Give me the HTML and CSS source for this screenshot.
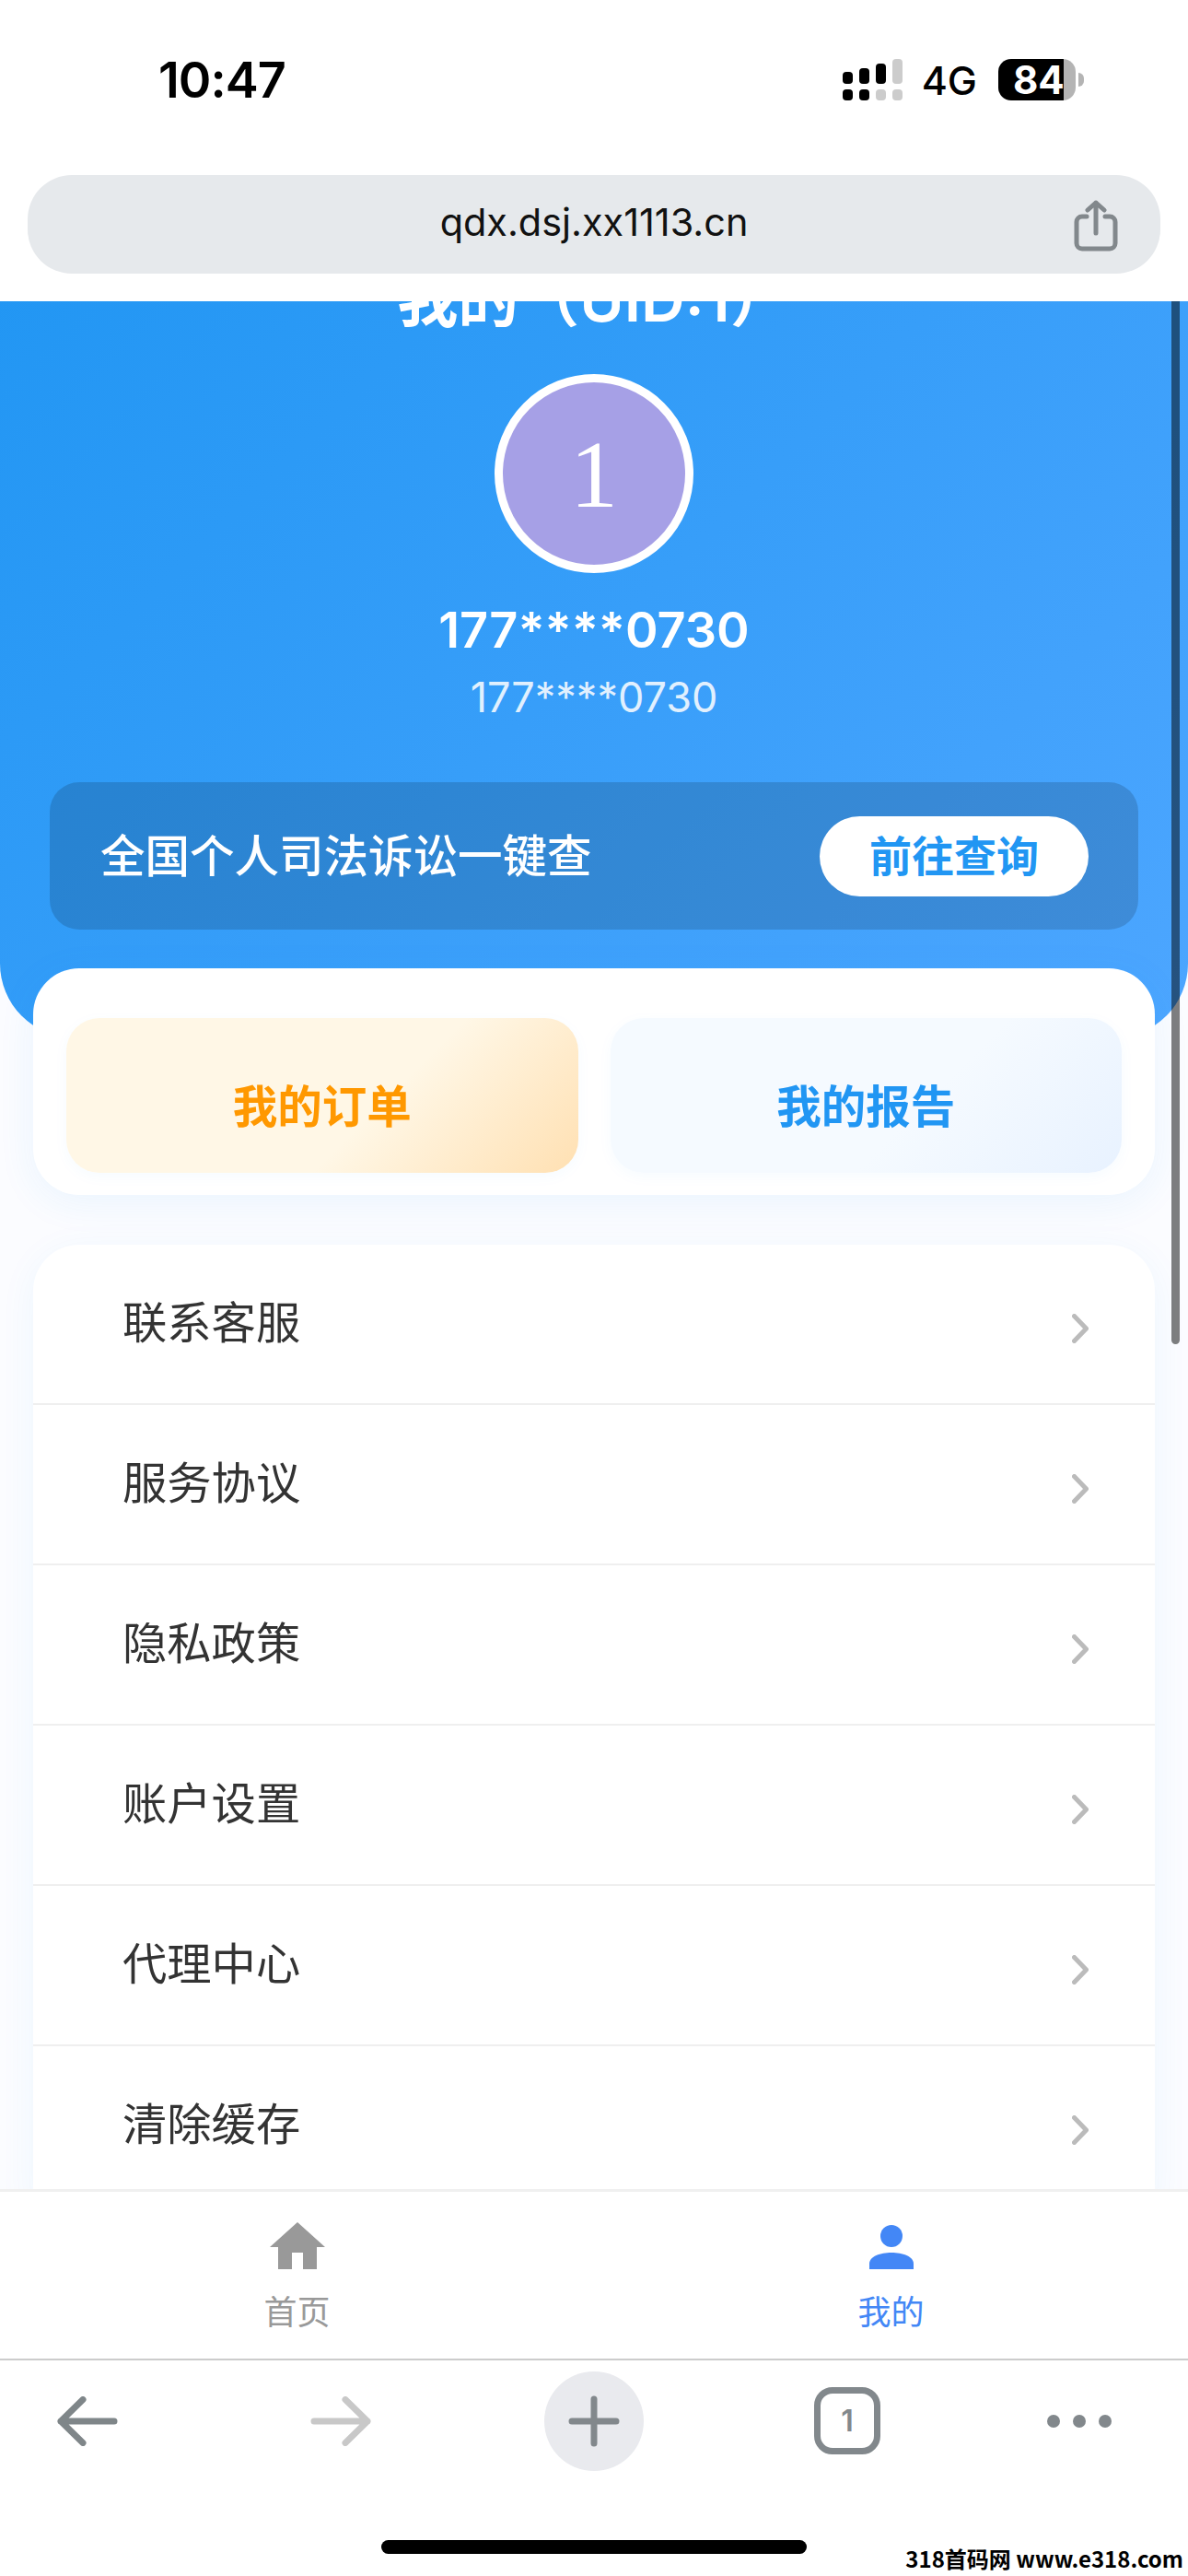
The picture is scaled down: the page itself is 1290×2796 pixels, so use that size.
FILE: index.html
```html
<!DOCTYPE html>
<html lang="zh-CN">
<head>
    <meta charset="UTF-8">
    <meta name="viewport" content="width=device-width, initial-scale=1.0">
    <title>我的</title>
    <link rel="stylesheet" href="styles.css">
</head>
<body>
    <div class="status-bar">
        <span class="time">10:47</span>
        <div class="status-right">
            <svg class="signal" viewBox="0 0 65 45">
                <rect x="0" y="14" width="11" height="13" rx="4" fill="#000"/>
                <rect x="18" y="10" width="11" height="17" rx="4" fill="#000"/>
                <rect x="36" y="5" width="11" height="22" rx="4" fill="#000"/>
                <rect x="54" y="0" width="11" height="27" rx="4" fill="#ccc"/>
                <rect x="0" y="33" width="11" height="12" rx="4" fill="#000"/>
                <rect x="18" y="33" width="11" height="12" rx="4" fill="#000"/>
                <rect x="36" y="33" width="11" height="12" rx="4" fill="#ccc"/>
                <rect x="54" y="33" width="11" height="12" rx="4" fill="#ccc"/>
            </svg>
            <span class="network">4G</span>
            <div class="battery"><span class="battery-level">84</span></div>
            <div class="battery-nub"></div>
        </div>
    </div>

    <div class="url-wrap">
        <div class="url-bar">
            <span class="url-text">qdx.dsj.xx1113.cn</span>
            <svg class="share-icon" viewBox="0 0 48 56" fill="none" stroke="#82888c" stroke-width="5" stroke-linecap="round" stroke-linejoin="round">
                <path d="M14 18H9a6 6 0 0 0-6 6v23a6 6 0 0 0 6 6h30a6 6 0 0 0 6-6V24a6 6 0 0 0-6-6h-5"/>
                <path d="M24 36V3M15 11l9-8 9 8"/>
            </svg>
        </div>
    </div>

    <div class="main">
        <div class="page">
            <div class="hero">
                <div class="hero-title">我的（UID:1）</div>
                <div class="avatar">1</div>
                <div class="user-name">177****0730</div>
                <div class="user-phone">177****0730</div>
                <div class="banner">
                    <span class="banner-text">全国个人司法诉讼一键查</span>
                    <span class="banner-btn">前往查询</span>
                </div>
            </div>

            <div class="quick-card">
                <div class="quick-btn quick-orders">我的订单</div>
                <div class="quick-btn quick-reports">我的报告</div>
            </div>

            <div class="menu">
                <div class="menu-row"><span>联系客服</span><svg class="chevron" viewBox="0 0 18 32"><path d="M2.5 2.5L15.5 16L2.5 29.5"/></svg></div>
                <div class="menu-row"><span>服务协议</span><svg class="chevron" viewBox="0 0 18 32"><path d="M2.5 2.5L15.5 16L2.5 29.5"/></svg></div>
                <div class="menu-row"><span>隐私政策</span><svg class="chevron" viewBox="0 0 18 32"><path d="M2.5 2.5L15.5 16L2.5 29.5"/></svg></div>
                <div class="menu-row"><span>账户设置</span><svg class="chevron" viewBox="0 0 18 32"><path d="M2.5 2.5L15.5 16L2.5 29.5"/></svg></div>
                <div class="menu-row"><span>代理中心</span><svg class="chevron" viewBox="0 0 18 32"><path d="M2.5 2.5L15.5 16L2.5 29.5"/></svg></div>
                <div class="menu-row"><span>清除缓存</span><svg class="chevron" viewBox="0 0 18 32"><path d="M2.5 2.5L15.5 16L2.5 29.5"/></svg></div>
            </div>
        </div>
        <div class="scroll-thumb"></div>
    </div>

    <div class="tabbar">
        <div class="tab">
            <svg class="tab-icon" viewBox="0 0 60 51"><path d="M30 0L60 27H51V51H36V33H24V51H9V27H0Z" fill="#999"/></svg>
            <span class="tab-label">首页</span>
        </div>
        <div class="tab tab-active">
            <svg class="tab-icon" viewBox="0 0 60 51"><circle cx="30" cy="15" r="12" fill="#4387f6"/><path d="M6 51V45C6 37 18 33 30 33S54 37 54 45V51Z" fill="#4387f6"/></svg>
            <span class="tab-label">我的</span>
        </div>
    </div>

    <div class="toolbar">
        <svg class="tool-arrow" viewBox="0 0 66 54" fill="none" stroke="#7f8689" stroke-width="7" stroke-linecap="round" stroke-linejoin="round"><path d="M62 27H4M28 3.500L4 27L28 50.500"/></svg>
        <svg class="tool-arrow" viewBox="0 0 66 54" fill="none" stroke="#c8c8c8" stroke-width="7" stroke-linecap="round" stroke-linejoin="round"><path d="M4 27H62M38 3.500L62 27L38 50.500"/></svg>
        <div class="tool-plus">
            <svg class="plus-icon" viewBox="0 0 56 56" fill="none" stroke="#82888c" stroke-width="7" stroke-linecap="round"><path d="M28 4V52M4 28H52"/></svg>
        </div>
        <div class="tool-tabs">1</div>
        <div class="tool-dots"><i></i><i></i><i></i></div>
    </div>

    <div class="home-bar"></div>
    <div class="watermark">318首码网 www.e318.com</div>
</body>
</html>
```
FILE: styles.css
```css
/* Basic page */
* {
    box-sizing: border-box;
}
body {
    margin: 0;
    width: 1290px;
    height: 2796px;
    padding-bottom: 24px;
    display: flex;
    flex-direction: column;
    position: relative;
    overflow: hidden;
    background-color: #fff;
    font-family: Inter, "Noto Sans CJK SC", sans-serif;
}

/* Status bar */
.status-bar {
    height: 190px;
    padding: 64px 113px 0 172px;
    display: flex;
    justify-content: space-between;
    align-items: flex-start;
}
.time {
    font-size: 54px;
    font-weight: 600;
    line-height: 46px;
    letter-spacing: -1px;
    color: #000;
}
.status-right {
    display: flex;
    align-items: center;
    height: 45px;
}
.signal {
    width: 65px;
    height: 45px;
}
.network {
    margin-left: 21px;
    font-size: 43px;
    font-weight: 500;
    color: #000;
}
.battery {
    margin-left: 23px;
    width: 84px;
    height: 45px;
    border-radius: 14px;
    background: linear-gradient(90deg, #000 0, #000 71px, #b4b4b4 71px);
    display: flex;
    align-items: center;
    padding-left: 16px;
}
.battery-level {
    font-size: 42px;
    font-weight: 700;
    color: #fff;
}
.battery-nub {
    margin-left: 3px;
    width: 6px;
    height: 15px;
    border-radius: 0 8px 8px 0;
    background-color: #b4b4b4;
}

/* Address bar */
.url-wrap {
    height: 137px;
    padding: 0 30px;
}
.url-bar {
    height: 107px;
    padding-bottom: 5px;
    border-radius: 48px;
    background-color: #e6e9ec;
    position: relative;
    display: flex;
    justify-content: center;
    align-items: center;
}
.url-text {
    font-size: 41.4px;
    color: #111;
}
.share-icon {
    position: absolute;
    right: 46px;
    top: 27px;
    width: 48px;
    height: 56px;
}

/* Scrolled content */
.main {
    flex: 1;
    position: relative;
    overflow: hidden;
    background-color: #fbfcff;
}
.page {
    margin-top: -48px;
}
.hero {
    height: 847px;
    padding: 0 54px;
    border-radius: 0 0 80px 80px;
    background: linear-gradient(135deg, #2196f3 0%, #4da6ff 100%);
    display: flex;
    flex-direction: column;
    align-items: center;
    color: #fff;
}
.hero-title {
    height: 76px;
    padding-top: 8px;
    font-size: 66px;
    font-weight: 600;
    line-height: 76px;
}
.avatar {
    margin-top: 51px;
    width: 216px;
    height: 216px;
    border: 9px solid #fff;
    border-radius: 50%;
    background-color: #a6a0e6;
    font-family: "Liberation Serif", serif;
    font-size: 104px;
    display: flex;
    justify-content: center;
    align-items: center;
}
.user-name {
    margin-top: 32px;
    font-size: 54px;
    font-weight: 600;
    line-height: 60px;
}
.user-phone {
    margin-top: 17px;
    font-size: 45px;
    line-height: 52px;
    opacity: 0.85;
}
.banner {
    margin-top: 66px;
    width: 100%;
    height: 160px;
    padding: 0 54px 0 55px;
    border-radius: 32px;
    background-color: rgba(0, 0, 0, 0.15);
    display: flex;
    justify-content: space-between;
    align-items: center;
}
.banner-text {
    padding-bottom: 6px;
    font-size: 48.5px;
    font-weight: 500;
}
.banner-btn {
    width: 292px;
    height: 87px;
    padding-bottom: 6px;
    border-radius: 44px;
    background-color: #fff;
    color: #2196f3;
    font-size: 46px;
    font-weight: 600;
    display: flex;
    justify-content: center;
    align-items: center;
}

/* Orders and reports */
.quick-card {
    margin: -75px 36px 0;
    height: 246px;
    padding: 54px 36px 24px;
    border-radius: 50px;
    background-color: #fff;
    box-shadow: 0 8px 40px rgba(33, 150, 243, 0.08);
    display: flex;
    gap: 35px;
    position: relative;
}
.quick-btn {
    flex: 1;
    padding-top: 17px;
    border-radius: 36px;
    font-size: 48.5px;
    font-weight: 700;
    display: flex;
    justify-content: center;
    align-items: center;
    box-shadow: 0 4px 16px rgba(33, 150, 243, 0.04);
}
.quick-orders {
    background: linear-gradient(135deg, #fff7e6 60%, #ffe0b2 100%);
    color: #ff9800;
}
.quick-reports {
    background: linear-gradient(135deg, #f5faff 60%, #e8f2ff 100%);
    color: #2196f3;
}

/* Menu list */
.menu {
    margin: 54px 36px 0;
    border-radius: 50px 50px 0 0;
    background-color: #fff;
    box-shadow: 0 8px 40px rgba(33, 150, 243, 0.06);
}
.menu-row {
    height: 174px;
    padding: 0 72px 0 97px;
    border-bottom: 2px solid #efefef;
    display: flex;
    justify-content: space-between;
    align-items: center;
    font-size: 48.3px;
    color: #333;
}
.menu-row span {
    padding-bottom: 10px;
}
.chevron {
    margin-top: 10px;
    width: 18px;
    height: 32px;
    fill: none;
    stroke: #bbb;
    stroke-width: 5;
    stroke-linecap: round;
    stroke-linejoin: round;
}
.scroll-thumb {
    position: absolute;
    left: 1272px;
    top: 0;
    width: 9px;
    height: 1132px;
    border-radius: 0 0 5px 5px;
    background-color: rgba(0, 0, 0, 0.5);
}

/* Tabs */
.tabbar {
    height: 186px;
    border-top: 3px solid #f0f0f0;
    border-bottom: 2px solid #ccc;
    background-color: #fff;
    display: grid;
    grid-template-columns: 1fr 1fr;
}
.tab {
    padding-top: 33px;
    display: flex;
    flex-direction: column;
    align-items: center;
    color: #999;
}
.tab-active {
    color: #4387f6;
}
.tab-icon {
    width: 60px;
    height: 51px;
}
.tab-label {
    margin-top: 25px;
    font-size: 36px;
    line-height: 44px;
}

/* Browser toolbar */
.toolbar {
    height: 120px;
    padding-top: 11px;
    display: grid;
    grid-template-columns: 190px 360px 190px 360px 144px;
    justify-items: center;
    align-items: center;
}
.tool-arrow {
    width: 66px;
    height: 54px;
}
.tool-plus {
    width: 108px;
    height: 108px;
    border-radius: 50%;
    background-color: #e9eaee;
    display: flex;
    justify-content: center;
    align-items: center;
}
.plus-icon {
    width: 56px;
    height: 56px;
}
.tool-tabs {
    width: 72px;
    height: 73px;
    border: 7px solid #82888c;
    border-radius: 20px;
    color: #82888c;
    font-size: 32px;
    font-weight: 600;
    display: flex;
    justify-content: center;
    align-items: center;
}
.tool-dots {
    display: flex;
    gap: 14px;
}
.tool-dots i {
    width: 14px;
    height: 14px;
    border-radius: 50%;
    background-color: #82888c;
}
.home-bar {
    flex-shrink: 0;
    margin: 75px auto 0;
    width: 462px;
    height: 15px;
    border-radius: 8px;
    background-color: #000;
}
.watermark {
    position: absolute;
    right: 5px;
    bottom: 2px;
    font-family: "Liberation Sans Narrow", "Noto Sans CJK SC", sans-serif;
    font-size: 24px;
    font-weight: 700;
    color: #000;
}
```
